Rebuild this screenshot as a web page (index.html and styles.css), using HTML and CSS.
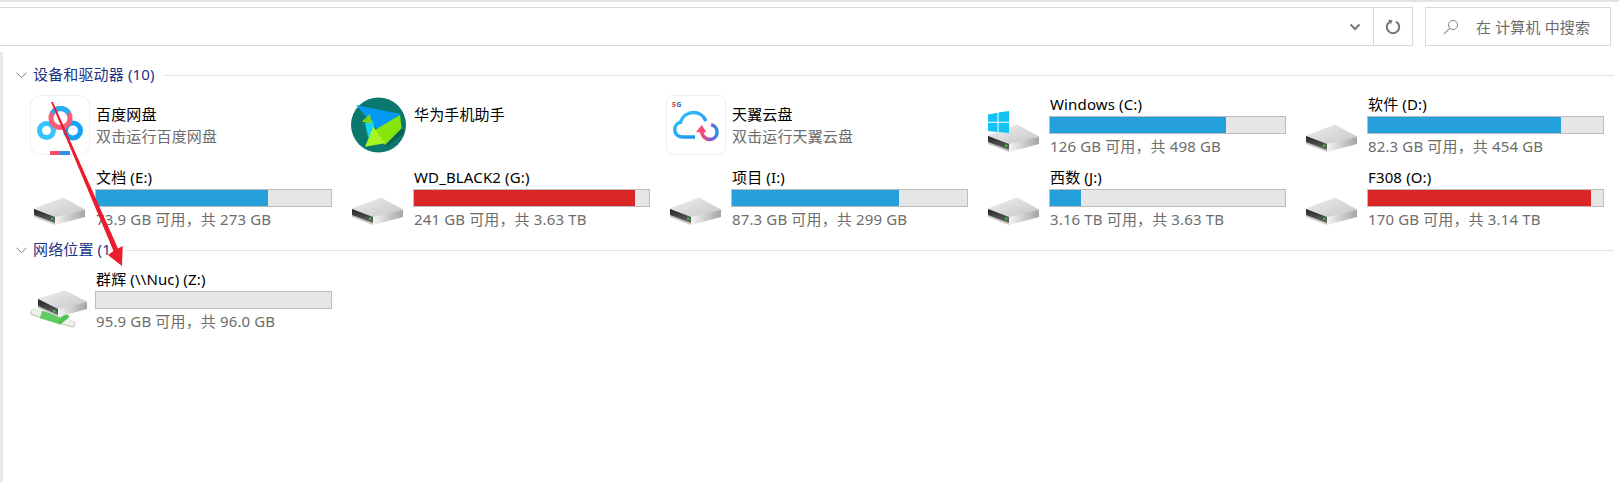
FILE: index.html
```html
<!DOCTYPE html>
<html lang="zh">
<head>
<meta charset="utf-8">
<title>此电脑</title>
<link rel="stylesheet" href="styles.css">
</head>
<body>
<svg class="defs" width="0" height="0" aria-hidden="true">
  <defs>
    <linearGradient id="dtop" x1="0" y1="0" x2="1" y2="1"><stop offset="0" stop-color="#eeeef0"/><stop offset="1" stop-color="#c6c6ca"/></linearGradient>
    <linearGradient id="dside" x1="0" y1="0" x2="1" y2="0"><stop offset="0" stop-color="#f4f4f4"/><stop offset="1" stop-color="#a4a4a4"/></linearGradient>
    <linearGradient id="dfront" x1="0" y1="0" x2="0" y2="1"><stop offset="0" stop-color="#222"/><stop offset="1" stop-color="#6a6a6a"/></linearGradient>
    <linearGradient id="tcloud" x1="0" y1="0" x2="1" y2="1"><stop offset="0" stop-color="#2fc6f8"/><stop offset="1" stop-color="#1f8cf0"/></linearGradient>
    <linearGradient id="tarrow" x1="0" y1="0" x2="1" y2="0"><stop offset="0" stop-color="#fb4a6d"/><stop offset=".6" stop-color="#8a55d0"/><stop offset="1" stop-color="#2a8cf0"/></linearGradient>
    <symbol id="drive" viewBox="0 0 60 60">
      <polygon points="4,42 33,31 55,43 25,50" fill="url(#dtop)" stroke="url(#dtop)" stroke-width="1" stroke-linejoin="round"/>
      <polygon points="4,42 25,50 25,58 4,50" fill="#c8c8c8"/>
      <polygon points="4,42 25,50 25,56 4,48" fill="url(#dfront)"/>
      <polygon points="25,50 55,43 55,50 25,58" fill="url(#dside)"/>
      <rect class="led" x="21" y="50.500" width="2.400" height="2.400"/>
    </symbol>
  </defs>
</svg>

<div class="topline"></div>
<header class="toolbar">
  <div class="address">
    <div class="address-fill"></div>
    <div class="address-btn chevron-btn">
      <svg width="12" height="8" viewBox="0 0 12 8"><path d="M1.500 1.500 6 6l4.500-4.500" fill="none" stroke="#777" stroke-width="2"/></svg>
    </div>
    <div class="address-btn refresh-btn">
      <svg width="16" height="16" viewBox="0 0 16 16"><path d="M5 2.600A6.200 6.200 0 1 0 11 2.600" fill="none" stroke="#777" stroke-width="2"/><path d="M3.200.4 7.400 1.300 5.800 5.400z" fill="#777"/></svg>
    </div>
  </div>
  <div class="search">
    <svg class="search-icon" width="16" height="16" viewBox="0 0 16 16"><circle cx="10" cy="6" r="4.600" fill="none" stroke="#8a8a8a" stroke-width="1"/><path d="M6.600 9.400 1 15" stroke="#b08a6a" stroke-width="1.200"/></svg>
    <span>在 计算机 中搜索</span>
  </div>
</header>

<main class="content">
  <section>
    <h2 class="group"><svg class="group-chevron" width="11" height="7" viewBox="0 0 11 7"><path d="M.5.7 5.500 5.700 10.500.7" fill="none" stroke="#777" stroke-width="1"/></svg><span>设备和驱动器 (10)</span><i class="rule"></i></h2>
    <div class="grid">
      <div class="item">
        <svg class="icon" width="60" height="62" viewBox="0 0 60 62">
          <rect x=".5" y="1.500" width="59" height="59" rx="10" fill="#fff" stroke="#efefef"/>
          <g fill="none" stroke-width="5">
            <circle cx="16.500" cy="36.500" r="7" stroke="#35c4fb"/>
            <circle cx="43" cy="36.500" r="7.500" stroke="#14a2f6"/>
            <circle cx="30.500" cy="24" r="9.500" stroke="#fb5c78"/>
            <path d="M22.300 19.300A9.500 9.500 0 0 1 38.700 19.300" stroke="#1fb0f8"/>
          </g>
          <rect x="20" y="57" width="10" height="4" fill="#fb4a6d"/>
          <rect x="30" y="57" width="10" height="4" fill="#2b8ff3"/>
        </svg>
        <div class="text app"><div class="name">百度网盘</div><div class="sub">双击运行百度网盘</div></div>
      </div>
      <div class="item">
        <svg class="icon" width="60" height="62" viewBox="0 0 60 62">
          <circle cx="30.500" cy="31" r="27.500" fill="#0b786d"/>
          <polygon points="8,11 52.700,20 30.300,36" fill="#0699f2"/>
          <polygon points="17,29.300 24.300,26 30.300,46 20,42.700" fill="#17d3f8"/>
          <polygon points="53.700,34.300 57,38 38.700,52.700 37,51" fill="#0a5f57"/>
          <polygon points="52,21 53.700,34.300 37,51 27,36" fill="#86e50a"/>
          <polygon points="8,11 22,29.300 13.700,27.700 22,20 23.700,31" fill="#7fd70f"/>
          <polygon points="25.300,32.700 37,49.300 17,52.700" fill="#a6f522"/>
        </svg>
        <div class="text app"><div class="name">华为手机助手</div></div>
      </div>
      <div class="item">
        <svg class="icon" width="60" height="62" viewBox="0 0 60 62">
          <rect x=".5" y="1.500" width="59" height="59" rx="6" fill="#fff" stroke="#eceef2"/>
          <text x="6" y="13" class="fiveg"><tspan class="five">5</tspan><tspan class="g">G</tspan></text>
          <path d="M29 43H16a7.500 7.500 0 0 1-1.500-14.800A13.500 13.500 0 0 1 40 27" fill="none" stroke="url(#tcloud)" stroke-width="3.500"/>
          <path d="M35.700 37c0 5 4 8.500 8.500 8.500a7.500 7.500 0 0 0 1-14.800" fill="none" stroke="url(#tarrow)" stroke-width="3.500"/>
          <polygon points="35.700,31 30,38.300 40.500,38.300" fill="#fb4a6d"/>
        </svg>
        <div class="text app"><div class="name">天翼云盘</div><div class="sub">双击运行天翼云盘</div></div>
      </div>
      <div class="item">
        <svg class="icon" width="60" height="62"><use href="#drive" width="60" height="60"/>
          <g fill="#12c2f5">
            <polygon points="4,20.500 13.500,18.800 13.500,27.800 4,27.800"/>
            <polygon points="14.500,18.600 25,17 25,27.800 14.500,27.800"/>
            <polygon points="4,28.800 13.500,28.800 13.500,38 4,37"/>
            <polygon points="14.500,28.800 25,28.800 25,39 14.500,38"/>
          </g>
        </svg>
        <div class="text"><div class="name">Windows (C:)</div><div class="bar"><div class="fill" style="width:75%"></div></div><div class="sub">126 GB 可用，共 498 GB</div></div>
      </div>
      <div class="item">
        <svg class="icon" width="60" height="62"><use href="#drive" width="60" height="60"/></svg>
        <div class="text"><div class="name">软件 (D:)</div><div class="bar"><div class="fill" style="width:82.300%"></div></div><div class="sub">82.3 GB 可用，共 454 GB</div></div>
      </div>
      <div class="item">
        <svg class="icon" width="60" height="62"><use href="#drive" width="60" height="60"/></svg>
        <div class="text"><div class="name">文档 (E:)</div><div class="bar"><div class="fill" style="width:73%"></div></div><div class="sub">73.9 GB 可用，共 273 GB</div></div>
      </div>
      <div class="item">
        <svg class="icon" width="60" height="62"><use href="#drive" width="60" height="60"/></svg>
        <div class="text"><div class="name">WD_BLACK2 (G:)</div><div class="bar"><div class="fill red" style="width:94%"></div></div><div class="sub">241 GB 可用，共 3.63 TB</div></div>
      </div>
      <div class="item">
        <svg class="icon" width="60" height="62"><use href="#drive" width="60" height="60"/></svg>
        <div class="text"><div class="name">项目 (I:)</div><div class="bar"><div class="fill" style="width:71%"></div></div><div class="sub">87.3 GB 可用，共 299 GB</div></div>
      </div>
      <div class="item">
        <svg class="icon" width="60" height="62"><use href="#drive" width="60" height="60"/></svg>
        <div class="text"><div class="name">西数 (J:)</div><div class="bar"><div class="fill" style="width:13%"></div></div><div class="sub">3.16 TB 可用，共 3.63 TB</div></div>
      </div>
      <div class="item">
        <svg class="icon" width="60" height="62"><use href="#drive" width="60" height="60"/></svg>
        <div class="text"><div class="name">F308 (O:)</div><div class="bar"><div class="fill red" style="width:95%"></div></div><div class="sub">170 GB 可用，共 3.14 TB</div></div>
      </div>
    </div>
  </section>
  <section>
    <h2 class="group"><svg class="group-chevron" width="11" height="7" viewBox="0 0 11 7"><path d="M.5.7 5.500 5.700 10.500.7" fill="none" stroke="#777" stroke-width="1"/></svg><span>网络位置 (1)</span><i class="rule"></i></h2>
    <div class="grid">
      <div class="item">
        <svg class="icon" width="60" height="62" viewBox="0 0 60 62">
          <path d="M4 43.500 42 55" stroke="#c9cbc4" stroke-width="7" stroke-linecap="round"/>
          <path d="M4 43 42 54.500" stroke="#eef0ea" stroke-width="5" stroke-linecap="round"/>
          <path d="M28 54 38 46" stroke="#4fc255" stroke-width="5"/>
          <path d="M11 45.500 29 51" stroke="#5ccd5e" stroke-width="8"/>
          <polygon points="8,30 35,22 57,33 28,40" fill="url(#dtop)" stroke="url(#dtop)" stroke-linejoin="round"/>
          <polygon points="8,30 28,40 28,48 8,39" fill="#c8c8c8"/>
          <polygon points="8,30 28,40 28,46 8,37" fill="url(#dfront)"/>
          <polygon points="28,40 57,33 57,40 28,48" fill="url(#dside)"/>
          <rect class="led" x="23" y="41" width="2.400" height="2.400"/>
        </svg>
        <div class="text"><div class="name">群辉 (\\Nuc) (Z:)</div><div class="bar"></div><div class="sub">95.9 GB 可用，共 96.0 GB</div></div>
      </div>
    </div>
  </section>
</main>

<svg class="arrow" width="140" height="280" viewBox="0 0 140 280" aria-hidden="true">
  <polygon points="51,102 53,102 118,248.500 122.700,246 122,266 108,255 113.500,251" fill="#ec1c2e"/>
</svg>
</body>
</html>
```
FILE: styles.css
```css
* { box-sizing: border-box; }
html, body { margin: 0; padding: 0; background: #fff; }
body {
  position: relative;
  width: 1619px;
  height: 482px;
  overflow: hidden;
  font-family: "Noto Sans", "Noto Sans CJK SC", sans-serif;
  font-size: 15px;
  letter-spacing: .14px;
}
.defs { position: absolute; }
.topline { height: 7px; border-top: 2px solid #e3e3e3; }
.toolbar { display: flex; height: 39px; gap: 12px; padding-right: 8px; }
.address {
  display: flex;
  width: 1413px;
  border: 1px solid #d9d9d9;
  border-left: 0;
}
.address-fill { flex: 1; }
.address-btn { display: flex; align-items: center; justify-content: center; }
.chevron-btn { width: 40px; padding-left: 4px; }
.refresh-btn { width: 39px; border-left: 1px solid #d9d9d9; }
.search {
  display: flex;
  align-items: center;
  flex: 1;
  border: 1px solid #d9d9d9;
  padding-left: 17px;
  color: #6d6d6d;
  font-size: 15px;
}
.search-icon { margin-right: 17px; }
.content {
  margin-top: 6px;
  height: 430px;
  padding: 13px 5px 0 0;
  border-left: 3px solid #e9e9e9;
}
.group {
  display: flex;
  align-items: center;
  height: 20px;
  margin: 0 0 9px 0;
  padding-left: 13px;
  font-size: 15px;
  font-weight: 400;
  color: #1e3287;
}
.group-chevron { margin-right: 6px; }
.group span { line-height: 20px; padding-bottom: 2px; }
.rule { flex: 1; height: 1px; background: #e3e3e3; margin-left: 9px; }
.grid {
  display: grid;
  grid-template-columns: repeat(5, 318px);
  grid-auto-rows: 73px;
  padding-left: 27px;
}
.item { display: flex; gap: 5px; }
.icon { flex: none; display: block; overflow: visible; }
.text { width: 237px; }
.text.app { padding-top: 9px; }
.name { height: 22px; line-height: 20px; padding-left: 1px; color: #000; white-space: nowrap; }
.sub { height: 24px; line-height: 24px; padding-left: 1px; color: #6d6d6d; white-space: nowrap; }
.text.app .sub { line-height: 22px; }
.text.app .name { line-height: 22px; }
.bar { height: 18px; border: 1px solid #bcbcbc; background: #e6e6e6; }
.fill { height: 100%; background: #26a0da; }
.fill.red { background: #da2626; }
.led { fill: #22c83c; }
.fiveg { font-size: 7px; font-weight: 700; }
.five { fill: #e03a4a; }
.g { fill: #2a6fd8; }
.arrow { position: absolute; left: 0; top: 0; overflow: visible; pointer-events: none; }
```
